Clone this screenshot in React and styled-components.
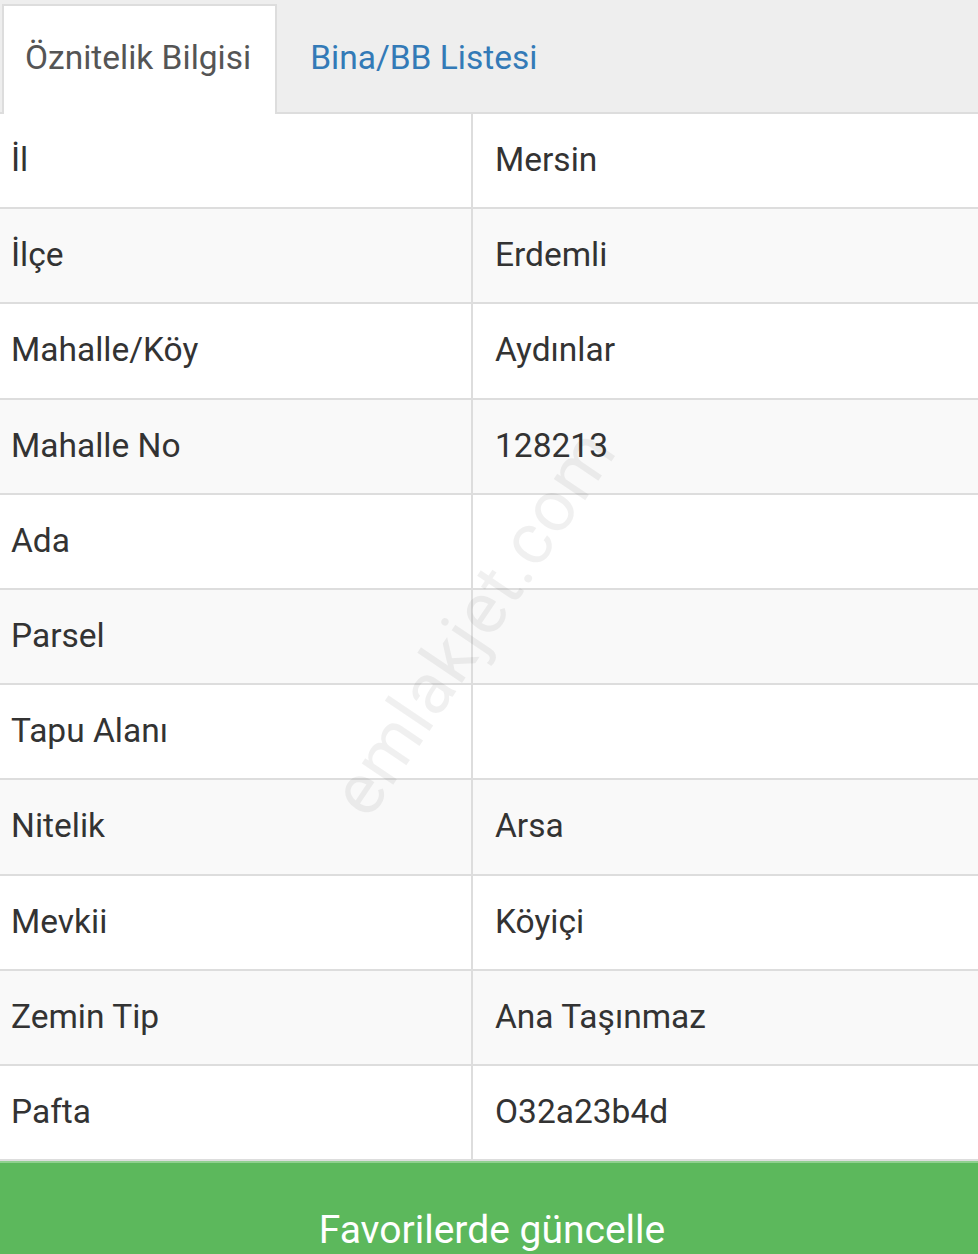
import React from 'react'
import styled, { createGlobalStyle } from 'styled-components';

const GlobalStyle = createGlobalStyle`
    body {
        margin: 0;
        background: #ffffff;
        font-family: Roboto, 'Liberation Sans', sans-serif;
        color: #333333;
    }
`

const Page = styled.div`
    position: relative;
    width: 978px;
    height: 1254px;
    overflow: hidden;
`

const TabBar = styled.div`
    display: flex;
    align-items: flex-end;
    height: 114px;
    background-color: #eeeeee;
    border-bottom: 2px solid #dddddd;
    box-sizing: border-box;
    padding-left: 2px;
`

const Tab = styled.div`
    height: 110px;
    box-sizing: border-box;
    display: flex;
    align-items: center;
    padding: 0 ${p => p.$active ? '24px' : '30px'} 6px ${p => p.$active ? '21px' : '31px'};
    font-size: 33.5px;
    color: ${p => p.$active ? '#555555' : '#337ab7'};
    background-color: ${p => p.$active ? '#ffffff' : 'transparent'};
    border: 2px solid ${p => p.$active ? '#dddddd' : 'transparent'};
    border-bottom: none;
    margin-bottom: -2px;
`

const Table = styled.div`
    display: flex;
    flex-direction: column;
`

const Row = styled.div`
    display: grid;
    grid-template-columns: 471px 1fr;
    height: 95.2px;
    box-sizing: border-box;
    border-bottom: 2px solid #dddddd;
    background-color: ${p => p.$striped ? '#f9f9f9' : '#ffffff'};
`

const Cell = styled.div`
    display: flex;
    align-items: center;
    font-size: 33.5px;
    color: #333333;
    padding-left: ${p => p.$value ? '22px' : '11px'};
    padding-bottom: 2px;
    border-left: ${p => p.$value ? '2px solid #dddddd' : 'none'};
`

const Button = styled.div`
    display: flex;
    justify-content: center;
    padding-top: 44px;
    height: 130px;
    box-sizing: border-box;
    background-color: #5cb85c;
    border-top: 2px solid #8fd08f;
    color: #ffffff;
    font-size: 39px;
    padding-left: 6px;
`

const Watermark = styled.div`
    position: absolute;
    left: 250px;
    top: 580px;
    transform: rotate(-56deg);
    transform-origin: center;
    font-size: 72px;
    color: rgba(0, 0, 0, 0.06);
    pointer-events: none;
    white-space: nowrap;
    letter-spacing: 1px;
`

const rows = [
    ['İl', 'Mersin'],
    ['İlçe', 'Erdemli'],
    ['Mahalle/Köy', 'Aydınlar'],
    ['Mahalle No', '128213'],
    ['Ada', ''],
    ['Parsel', ''],
    ['Tapu Alanı', ''],
    ['Nitelik', 'Arsa'],
    ['Mevkii', 'Köyiçi'],
    ['Zemin Tip', 'Ana Taşınmaz'],
    ['Pafta', 'O32a23b4d'],
]

function App() {
    return (
        <Page>
            <GlobalStyle />
            <TabBar>
                <Tab $active>Öznitelik Bilgisi</Tab>
                <Tab>Bina/BB Listesi</Tab>
            </TabBar>
            <Table>
                {rows.map(([label, value], i) => (
                    <Row key={label} $striped={i % 2 === 1}>
                        <Cell>{label}</Cell>
                        <Cell $value>{value}</Cell>
                    </Row>
                ))}
            </Table>
            <Button>Favorilerde güncelle</Button>
            <Watermark>emlakjet.com</Watermark>
        </Page>
    )
}

export default App;
